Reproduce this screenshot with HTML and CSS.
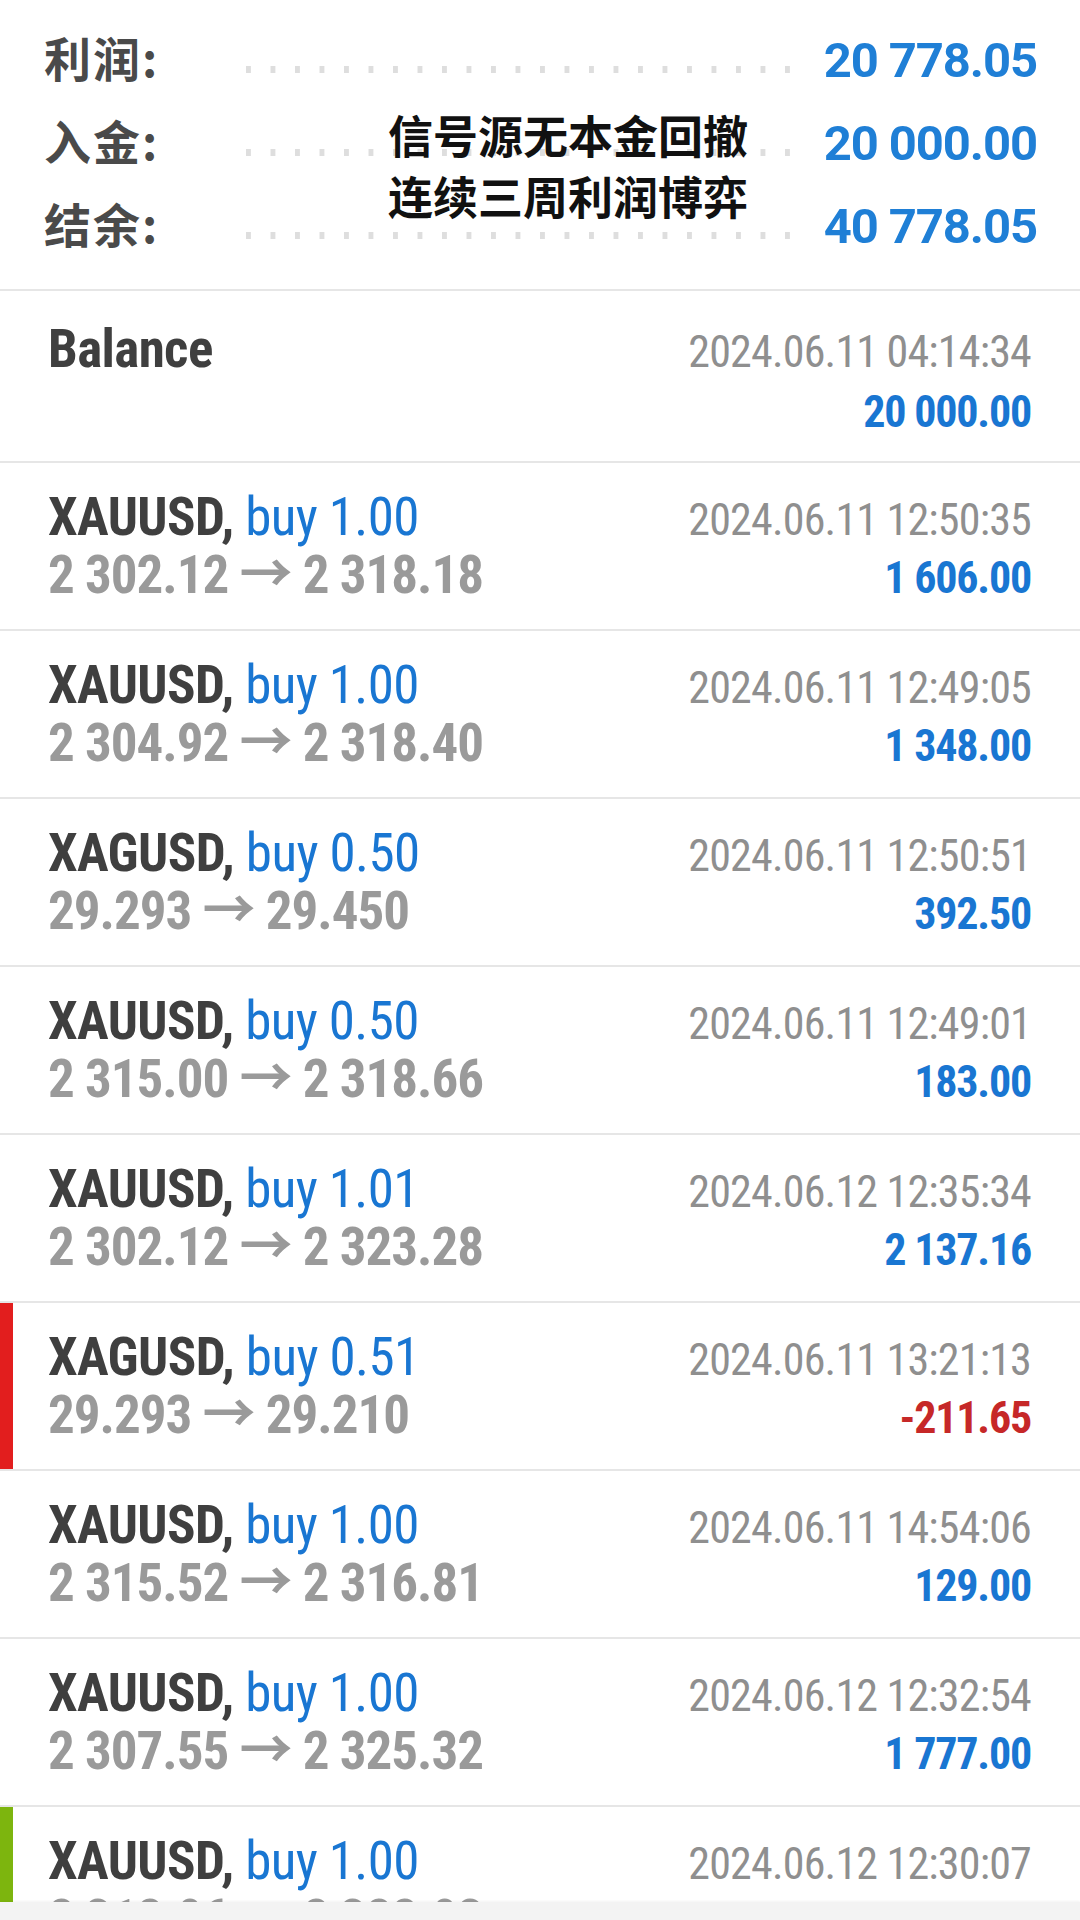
FILE: index.html
```html
<!DOCTYPE html>
<html lang="zh-CN">
<head>
  <meta charset="UTF-8">
  <title>历史</title>
  <link rel="stylesheet" href="styles.css">
</head>
<body>
  <div class="page">

    <div class="summary">
      <div class="sum-row">
        <span class="sum-label">利润:</span>
        <span class="dots"></span>
        <span class="sum-value">20 778.05</span>
      </div>
      <div class="sum-row">
        <span class="sum-label">入金:</span>
        <span class="dots"></span>
        <span class="sum-value">20 000.00</span>
      </div>
      <div class="sum-row">
        <span class="sum-label">结余:</span>
        <span class="dots"></span>
        <span class="sum-value">40 778.05</span>
      </div>
      <div class="caption">信号源无本金回撤<br>连续三周利润博弈</div>
    </div>

    <div class="deals">
      <div class="deal balance">
        <div class="line">
          <span class="sym">Balance</span>
          <span class="time">2024.06.11 04:14:34</span>
        </div>
        <div class="line">
          <span class="price"></span>
          <span class="profit">20 000.00</span>
        </div>
      </div>

      <div class="deal">
        <div class="line">
          <span class="sym">XAUUSD, <span class="type">buy 1.00</span></span>
          <span class="time">2024.06.11 12:50:35</span>
        </div>
        <div class="line">
          <span class="price">2 302.12 → 2 318.18</span>
          <span class="profit">1 606.00</span>
        </div>
      </div>

      <div class="deal">
        <div class="line">
          <span class="sym">XAUUSD, <span class="type">buy 1.00</span></span>
          <span class="time">2024.06.11 12:49:05</span>
        </div>
        <div class="line">
          <span class="price">2 304.92 → 2 318.40</span>
          <span class="profit">1 348.00</span>
        </div>
      </div>

      <div class="deal">
        <div class="line">
          <span class="sym">XAGUSD, <span class="type">buy 0.50</span></span>
          <span class="time">2024.06.11 12:50:51</span>
        </div>
        <div class="line">
          <span class="price">29.293 → 29.450</span>
          <span class="profit">392.50</span>
        </div>
      </div>

      <div class="deal">
        <div class="line">
          <span class="sym">XAUUSD, <span class="type">buy 0.50</span></span>
          <span class="time">2024.06.11 12:49:01</span>
        </div>
        <div class="line">
          <span class="price">2 315.00 → 2 318.66</span>
          <span class="profit">183.00</span>
        </div>
      </div>

      <div class="deal">
        <div class="line">
          <span class="sym">XAUUSD, <span class="type">buy 1.01</span></span>
          <span class="time">2024.06.12 12:35:34</span>
        </div>
        <div class="line">
          <span class="price">2 302.12 → 2 323.28</span>
          <span class="profit">2 137.16</span>
        </div>
      </div>

      <div class="deal mark-loss">
        <div class="line">
          <span class="sym">XAGUSD, <span class="type">buy 0.51</span></span>
          <span class="time">2024.06.11 13:21:13</span>
        </div>
        <div class="line">
          <span class="price">29.293 → 29.210</span>
          <span class="profit loss">-211.65</span>
        </div>
      </div>

      <div class="deal">
        <div class="line">
          <span class="sym">XAUUSD, <span class="type">buy 1.00</span></span>
          <span class="time">2024.06.11 14:54:06</span>
        </div>
        <div class="line">
          <span class="price">2 315.52 → 2 316.81</span>
          <span class="profit">129.00</span>
        </div>
      </div>

      <div class="deal">
        <div class="line">
          <span class="sym">XAUUSD, <span class="type">buy 1.00</span></span>
          <span class="time">2024.06.12 12:32:54</span>
        </div>
        <div class="line">
          <span class="price">2 307.55 → 2 325.32</span>
          <span class="profit">1 777.00</span>
        </div>
      </div>

      <div class="deal mark-win">
        <div class="line">
          <span class="sym">XAUUSD, <span class="type">buy 1.00</span></span>
          <span class="time">2024.06.12 12:30:07</span>
        </div>
        <div class="line">
          <span class="price">2 312.96 → 2 322.93</span>
          <span class="profit">997.00</span>
        </div>
      </div>
    </div>

    <div class="navbar"></div>
  </div>
</body>
</html>
```

FILE: styles.css
```css
body {
  margin: 0;
  background: #fff;
  font-family: "Roboto Condensed", Roboto, "Noto Sans CJK SC", sans-serif;
}
.page {
  width: 1080px;
  height: 1920px;
  display: flex;
  flex-direction: column;
  overflow: hidden;
}

/* summary block */
.summary {
  position: relative;
  flex: none;
  height: 289px;
  box-sizing: border-box;
  padding-top: 15px;
}
.sum-row {
  display: flex;
  align-items: baseline;
  height: 83px;
  line-height: 83px;
  padding: 0 43px 0 44px;
}
.sum-label {
  width: 202px;
  font-family: "Noto Sans CJK SC", sans-serif;
  font-weight: bold;
  font-size: 47px;
  letter-spacing: 2px;
  color: #4a4a4a;
}
.dots {
  flex: 1;
  align-self: stretch;
  background-image: linear-gradient(90deg, #dedede 5px, transparent 5px);
  background-size: 24.5px 7px;
  background-repeat: repeat-x;
  background-position: 0 51px;
}
.sum-value {
  margin-left: 30px;
  font-family: Roboto, sans-serif;
  font-weight: bold;
  font-size: 49px;
  letter-spacing: -1.1px;
  color: #1f7fd6;
}
.caption {
  position: absolute;
  left: 388px;
  top: 104px;
  font-family: "Noto Sans CJK SC", sans-serif;
  font-weight: bold;
  font-size: 45px;
  line-height: 61px;
  color: #111;
}

/* deals list */
.deals {
  flex: 1;
  overflow: hidden;
}
.deal {
  height: 168px;
  box-sizing: border-box;
  border-top: 2px solid #e6e6e6;
  padding: 25px 49px 0 48px;
  font-stretch: 87.5%;
}
.deal.balance {
  height: 172px;
  padding-top: 29px;
}
.deal.balance .line + .line {
  margin-top: 5px;
}
.mark-loss {
  box-shadow: inset 13px 0 0 #e21e1e;
}
.mark-win {
  box-shadow: inset 13px 0 0 #7db50e;
}
.line {
  display: flex;
  justify-content: space-between;
  align-items: baseline;
  height: 58px;
  line-height: 58px;
  white-space: nowrap;
}
.sym {
  font-size: 53px;
  font-weight: bold;
  letter-spacing: -0.6px;
  color: #3f3f3f;
}
.type {
  font-weight: normal;
  color: #1976d2;
}
.price {
  font-size: 53px;
  font-weight: bold;
  letter-spacing: -1px;
  color: #9a9a9a;
}
.time {
  font-size: 44px;
  letter-spacing: -0.8px;
  color: #8f8f8f;
}
.profit {
  font-size: 44px;
  font-weight: bold;
  letter-spacing: -1.2px;
  color: #1976d2;
}
.profit.loss {
  color: #c62828;
}

.navbar {
  flex: none;
  height: 18px;
  background: #f3f3f3;
  box-shadow: 0 -1px 2px rgba(0, 0, 0, 0.05);
}
```
